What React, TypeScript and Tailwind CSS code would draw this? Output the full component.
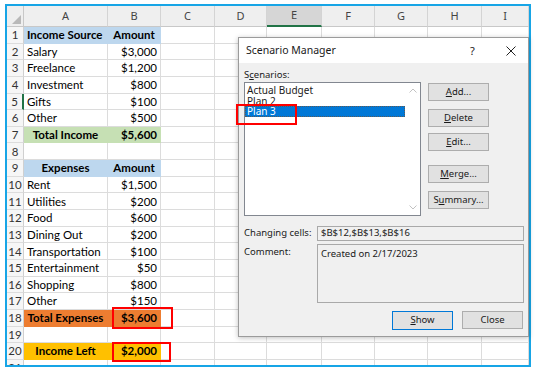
import React from "react";

type Cell = { t?: string; b?: boolean; a?: "l" | "c" | "r"; bg?: string };

const BLUE = "bg-[#bdd7ee]";
const GREEN = "bg-[#c6e0b4]";
const ORANGE = "bg-[#ed7d31]";
const GOLD = "bg-[#ffc000]";

const data: Record<number, [Cell, Cell]> = {
  1: [{ t: "Income Source", b: true, a: "l", bg: BLUE }, { t: "Amount", b: true, a: "c", bg: BLUE }],
  2: [{ t: "Salary" }, { t: "$3,000", a: "r" }],
  3: [{ t: "Freelance" }, { t: "$1,200", a: "r" }],
  4: [{ t: "Investment" }, { t: "$800", a: "r" }],
  5: [{ t: "Gifts" }, { t: "$100", a: "r" }],
  6: [{ t: "Other" }, { t: "$500", a: "r" }],
  7: [{ t: "Total Income", b: true, a: "c", bg: GREEN }, { t: "$5,600", b: true, a: "r", bg: GREEN }],
  9: [{ t: "Expenses", b: true, a: "c", bg: BLUE }, { t: "Amount", b: true, a: "c", bg: BLUE }],
  10: [{ t: "Rent" }, { t: "$1,500", a: "r" }],
  11: [{ t: "Utilities" }, { t: "$200", a: "r" }],
  12: [{ t: "Food" }, { t: "$600", a: "r" }],
  13: [{ t: "Dining Out" }, { t: "$200", a: "r" }],
  14: [{ t: "Transportation" }, { t: "$100", a: "r" }],
  15: [{ t: "Entertainment" }, { t: "$50", a: "r" }],
  16: [{ t: "Shopping" }, { t: "$800", a: "r" }],
  17: [{ t: "Other" }, { t: "$150", a: "r" }],
  18: [{ t: "Total Expenses", b: true, a: "c", bg: ORANGE }, { t: "$3,600", b: true, a: "r", bg: ORANGE }],
  20: [{ t: "Income Left", b: true, a: "c", bg: GOLD }, { t: "$2,000", b: true, a: "r", bg: GOLD }],
};

const COLS = ["A", "B", "C", "D", "E", "F", "G", "H", "I"];
const COLW = [
  "w-[84px]",
  "w-[53px]",
  "w-[54px]",
  "w-[52px]",
  "w-[55px]",
  "w-[53px]",
  "w-[53px]",
  "w-[54px]",
  "w-[47px]",
];

const alignCls = (a?: "l" | "c" | "r") =>
  a === "r" ? "justify-end" : a === "c" ? "justify-center" : "justify-start";

function GridCell({ c, i }: { c?: Cell; i: number }) {
  const bg = c?.bg;
  return (
    <div
      className={`${COLW[i]} h-full shrink-0 border-r border-b flex items-center px-[3px] overflow-visible whitespace-nowrap ${
        bg ? "border-transparent " + bg : "border-[#dcdcdc]"
      } ${alignCls(c?.a)} ${c?.b ? "font-bold" : ""}`}
    >
      {c?.t}
    </div>
  );
}

function Btn({ children, def }: { children: React.ReactNode; def?: boolean }) {
  return (
    <div
      className={`w-[61px] flex items-center justify-center bg-[#e1e1e1] border ${
        def ? "border-[#0078d7] h-[19px]" : "border-[#adadad] h-[18px]"
      } text-[9.5px] text-[#1a1a1a]`}
    >
      {children}
    </div>
  );
}

export default function App() {
  const rows = Array.from({ length: 21 }, (_, k) => k + 1);
  return (
    <div
      className="relative w-[540px] h-[374px] bg-white overflow-hidden pt-[4px] pl-[5px]"
      style={{ fontFamily: "Lato, 'Liberation Sans', sans-serif" }}
    >
      <div className="w-[526px] h-[363px] border-2 border-[#17a5e6] overflow-hidden bg-white">
        {/* column header */}
        <div className="flex h-[21px] bg-[#efefef] text-[11px] text-[#444]" style={{ fontFamily: "'Noto Sans', sans-serif" }}>
          <div className="w-[17px] h-full shrink-0 border-r border-b border-[#c8c8c8] relative">
            <div className="absolute right-[2px] bottom-[2px] w-0 h-0 border-l-[9px] border-l-transparent border-b-[9px] border-b-[#b9b9b9]" />
          </div>
          {COLS.map((c, i) => (
            <div
              key={c}
              className={`${COLW[i]} h-full shrink-0 border-r border-[#d4d4d4] flex items-center justify-center ${
                c === "E" ? "bg-[#d6d6d6] border-b-2 border-b-[#217346]" : "border-b border-b-[#c8c8c8]"
              }`}
            >
              {c}
            </div>
          ))}
        </div>
        {rows.map((r) => {
          const d = data[r];
          return (
            <div key={r} className="flex h-[16.65px] text-[11.5px] text-black">
              <div
                className={`w-[17px] h-full shrink-0 border-b border-[#dcdcdc] bg-[#f6f6f6] flex items-center justify-center text-[11.5px] text-[#333] ${
                  r === 5 ? "border-r-2 border-r-[#217346]" : "border-r border-r-[#d0d0d0]"
                }`}
              >
                {r}
              </div>
              {COLS.map((_, i) => (
                <GridCell key={i} i={i} c={i === 0 ? d?.[0] : i === 1 ? d?.[1] : undefined} />
              ))}
            </div>
          );
        })}
      </div>

      {/* Dialog */}
      <div
        className="absolute left-[238px] top-[37px] w-[291px] h-[300px] bg-[#f0f0f0] border border-[#9b9b9b] shadow-[0_1px_5px_rgba(0,0,0,0.25)] flex flex-col text-[9.5px] text-[#1a1a1a]"
        style={{ fontFamily: "'Noto Sans', 'Liberation Sans', sans-serif" }}
      >
        <div className="h-[25px] shrink-0 bg-white relative flex items-center pl-[7px] text-[10.5px]">
          <span>Scenario Manager</span>
          <span className="absolute left-[231px] top-[5px] text-[11px]">?</span>
          <svg className="absolute left-[267px] top-[8px]" width="10" height="10" viewBox="0 0 10 10">
            <path d="M0.5 0.5 L9.5 9.5 M9.5 0.5 L0.5 9.5" stroke="#222" strokeWidth="1" />
          </svg>
        </div>
        <div className="flex flex-col pl-[5px] pt-[6px]">
          <div className="h-[12px] leading-[12px]">
            S<span className="underline">c</span>enarios:
          </div>
          <div className="flex mt-[1px]">
            <div className="w-[177px] h-[134px] bg-white border border-[#828790] flex">
              <div className="w-[160px] flex flex-col pt-[2px] text-[10px] leading-[10.5px]">
                <div className="h-[10.5px] pl-[2px] whitespace-nowrap">Actual Budget</div>
                <div className="h-[10px] pl-[2px] whitespace-nowrap overflow-hidden">Plan 2</div>
                <div className="h-[11px] pl-[2px] bg-[#0078d7] text-white whitespace-nowrap relative z-10 outline-dotted outline-1 outline-[#5a5a5a] -outline-offset-1">
                  Plan 3
                </div>
              </div>
              <div className="flex-1 flex flex-col justify-between items-center py-[5px]">
                <svg width="8" height="5" viewBox="0 0 8 5">
                  <path d="M0.5 4.5 L4 1 L7.5 4.5" fill="none" stroke="#c2c2c2" strokeWidth="1" />
                </svg>
                <svg width="8" height="5" viewBox="0 0 8 5">
                  <path d="M0.5 0.5 L4 4 L7.5 0.5" fill="none" stroke="#c2c2c2" strokeWidth="1" />
                </svg>
              </div>
            </div>
            <div className="flex flex-col ml-[7px] pt-[1px]">
              <Btn>
                <span className="underline">A</span>dd...
              </Btn>
              <div className="mt-[8px]">
                <Btn>
                  <span className="underline">D</span>elete
                </Btn>
              </div>
              <div className="mt-[6px]">
                <Btn>
                  <span className="underline">E</span>dit...
                </Btn>
              </div>
              <div className="mt-[14px]">
                <Btn>
                  <span className="underline">M</span>erge...
                </Btn>
              </div>
              <div className="mt-[8px]">
                <Btn>
                  S<span className="underline">u</span>mmary...
                </Btn>
              </div>
            </div>
          </div>
          <div className="flex items-center mt-[10px]">
            <div className="w-[73px] shrink-0 whitespace-nowrap">Changing cells:</div>
            <div className="w-[207px] h-[15px] border border-[#a9a9a9] bg-[#f0f0f0] flex items-center pl-[3px]">
              $B$12,$B$13,$B$16
            </div>
          </div>
          <div className="flex mt-[3px]">
            <div className="w-[73px] shrink-0 pt-[1px]">Comment:</div>
            <div className="w-[207px] h-[59px] border border-[#a9a9a9] bg-[#f0f0f0] pl-[3px] pt-[2px]">
              Created on 2/17/2023
            </div>
          </div>
          <div className="flex justify-end gap-[9px] mt-[8px] pr-[5px]">
            <Btn def>
              <span className="underline">S</span>how
            </Btn>
            <Btn>Close</Btn>
          </div>
        </div>
      </div>

      {/* red highlight boxes */}
      <div className="absolute left-[236px] top-[104px] w-[61px] h-[21px] border-2 border-[#ff0000] z-20" />
      <div className="absolute left-[112px] top-[307px] w-[61px] h-[22px] border-2 border-[#ff0000]" />
      <div className="absolute left-[112px] top-[342px] w-[59px] h-[20px] border-2 border-[#ff0000]" />
    </div>
  );
}
